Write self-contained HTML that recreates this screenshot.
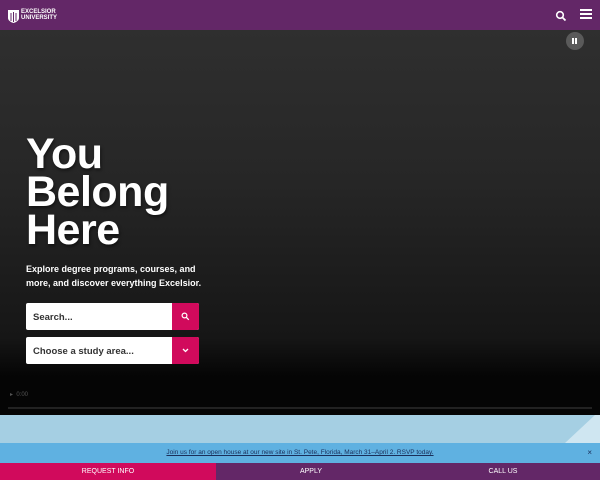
<!DOCTYPE html>
<html><head><style>
*{margin:0;padding:0;box-sizing:border-box}
body{width:600px;height:480px;overflow:hidden;font-family:"Liberation Sans",sans-serif;background:#000;position:relative}
.hdr{position:absolute;left:0;top:0;width:600px;height:30px;background:#632767}
.hero{position:absolute;left:0;top:30px;width:600px;height:385px;background:linear-gradient(#2f2f2f 0%,#262626 40%,#161616 80%,#050505 90%,#050505 100%)}
h1{position:absolute;left:26px;top:135px;color:#fff;font-size:43px;line-height:38px;font-weight:bold;letter-spacing:-0.5px;text-shadow:1px 2px 3px rgba(0,0,0,.5)}
.sub{position:absolute;left:26px;top:262px;color:#fff;font-size:9px;line-height:14px;font-weight:bold}
.box{position:absolute;left:26px;width:173px;height:27px;background:#fff;border-radius:2px;font-size:9.5px;font-weight:bold;color:#333;padding:9px 0 0 7px}
.btn{position:absolute;right:0;top:0;width:27px;height:27px;background:#d10a5c;border-radius:0 2px 2px 0}
.band{position:absolute;left:0;top:415px;width:600px;height:28px;background:#a5cfe3}
.ban{position:absolute;left:0;top:443px;width:600px;height:20px;background:#5fb1e1;font-size:6.5px;color:#1a2f5a;text-align:center;line-height:20px}
.bot{position:absolute;left:0;top:463px;width:600px;height:17px;display:flex;font-size:7px;color:#fff;line-height:17px;text-align:center}
</style></head><body>
<div class="hdr">
<svg style="position:absolute;left:7px;top:9px" width="13" height="14" viewBox="0 0 13 14"><path d="M1 1h11v8c0 2-2 4-5.5 5C3 13 1 11 1 9z" fill="#fff"/><path d="M4 4v8M6.5 3v10M9 4v8" stroke="#632767" stroke-width="1"/></svg>
<div style="position:absolute;left:21px;top:9px;color:#fff;font-size:6px;line-height:6px;font-weight:bold">EXCELSIOR<br>UNIVERSITY</div>
<svg style="position:absolute;left:555px;top:10px" width="12" height="12" viewBox="0 0 12 12"><circle cx="5" cy="5" r="3.3" stroke="#fff" stroke-width="1.6" fill="none"/><path d="M7.5 7.5l3 3" stroke="#fff" stroke-width="1.8"/></svg>
<div style="position:absolute;left:580px;top:9px;width:12px;height:2px;background:#fff;box-shadow:0 4px #fff,0 8px #fff"></div>
</div>
<div class="hero">
<div style="position:absolute;left:566px;top:2px;width:18px;height:18px;border-radius:50%;background:#5a5a5a"><div style="position:absolute;left:6px;top:6px;width:2px;height:6px;background:#fff;box-shadow:3px 0 #fff"></div></div>
<div style="position:absolute;left:10px;top:361px;color:#555;font-size:6px">▸ &nbsp;0:00</div>
<div style="position:absolute;left:8px;top:377px;width:584px;height:2px;background:#222"></div>
</div>
<h1>You<br>Belong<br>Here</h1>
<div class="sub">Explore degree programs, courses, and<br>more, and discover everything Excelsior.</div>
<div class="box" style="top:303px">Search...<div class="btn"><svg style="position:absolute;left:9px;top:9px" width="9" height="9" viewBox="0 0 9 9"><circle cx="3.5" cy="3.5" r="2.4" stroke="#fff" stroke-width="1.2" fill="none"/><path d="M5.3 5.3l2.5 2.5" stroke="#fff" stroke-width="1.3"/></svg></div></div>
<div class="box" style="top:337px">Choose a study area...<div class="btn"><svg style="position:absolute;left:10px;top:11px" width="7" height="5" viewBox="0 0 7 5"><path d="M1 1l2.5 2.5L6 1" stroke="#fff" stroke-width="1.3" fill="none"/></svg></div></div>
<div class="band"><svg style="position:absolute;right:0;top:0" width="60" height="28"><path d="M60 0v28H25L55 0z" fill="#cfe6f1"/></svg></div>
<div class="ban"><span style="text-decoration:underline">Join us for an open house at our new site in St. Pete, Florida, March 31–April 2. RSVP today.</span><span style="position:absolute;right:8px;font-size:8px">×</span></div>
<div class="bot"><div style="width:216px;background:#d10a5c">REQUEST INFO</div><div style="width:190px;background:#632767">APPLY</div><div style="width:194px;background:#632767">CALL US</div></div>
</body></html>
